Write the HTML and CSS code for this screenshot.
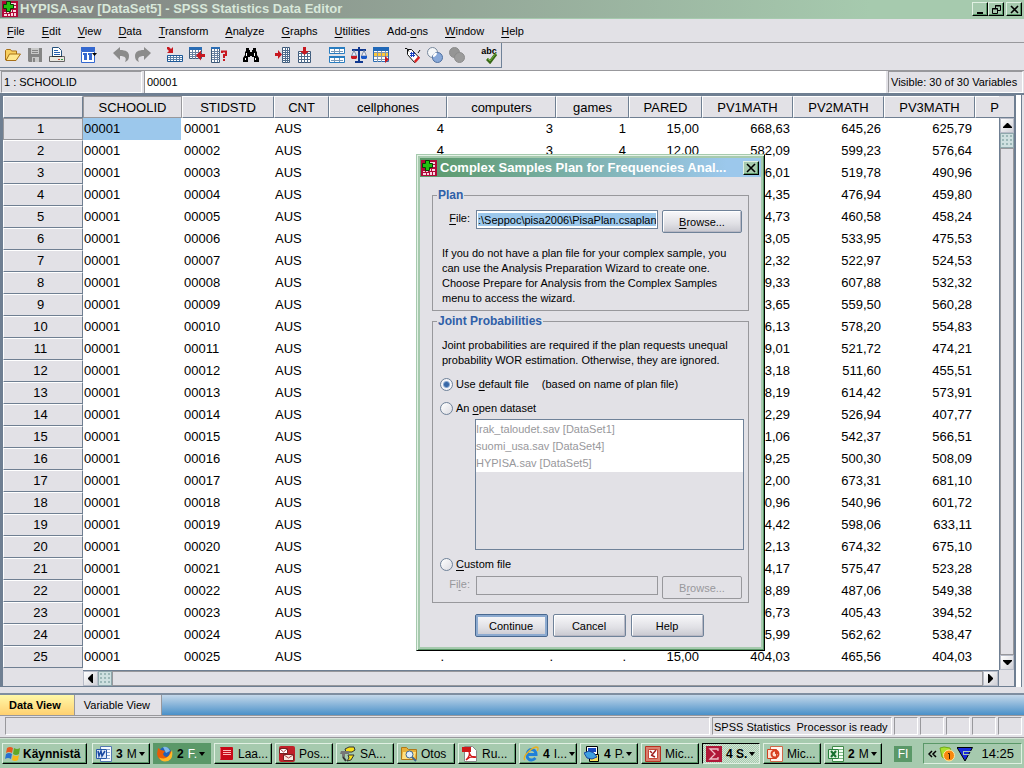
FILE: index.html
```html
<!DOCTYPE html>
<html lang="en">
<head>
<meta charset="utf-8">
<title>HYPISA.sav [DataSet5] - SPSS Statistics Data Editor</title>
<link rel="stylesheet" href="styles.css">
</head>
<body>
<svg class="defs" width="0" height="0" aria-hidden="true">
  <symbol id="app" viewBox="0 0 16 16"><path fill="#b00838" d="M0 0h16v16H0z"/><path fill="#f8d8e0" d="M9 2h5v2H9zM9 5h2v2H9zM12 5h2v2h-2zM2 11h2v1H2zM5 11h2v1H5zM8 9h2v2H8zM11 9h3v2h-3zM2 13h3v2H2zM6 13h2v2H6zM9 12h2v3H9zM12 12h2v3h-2z"/><path fill="#20c010" stroke="#063c06" d="M4.500.500h4v3h3v4h-3v3h-4v-3h-3v-4h3z"/></symbol>
</svg>
<div class="window">
  <header class="titlebar">
    <svg class="i16"><use href="#app"/></svg>
    <h1>HYPISA.sav [DataSet5] - SPSS Statistics Data Editor</h1>
    <div class="winbtns">
      <button aria-label="Minimize"><svg width="13" height="11"><path d="M3 8h6v2H3z"/></svg></button>
      <button aria-label="Restore"><svg width="13" height="11"><path fill="none" stroke="#000" d="M5.500 4V1.500h5v5H8M5 2h6M2.500 4.500h5v5h-5zM2 5h6"/></svg></button>
      <button class="x" aria-label="Close"><svg width="13" height="11"><path fill="none" stroke="#000" stroke-width="1.600" d="M3 2l7 7M10 2L3 9"/></svg></button>
    </div>
  </header>
  <nav class="menu">
    <a href="#"><u>F</u>ile</a><a href="#"><u>E</u>dit</a><a href="#"><u>V</u>iew</a><a href="#"><u>D</u>ata</a><a href="#"><u>T</u>ransform</a><a href="#"><u>A</u>nalyze</a><a href="#"><u>G</u>raphs</a><a href="#"><u>U</u>tilities</a><a href="#">Add-<u>o</u>ns</a><a href="#"><u>W</u>indow</a><a href="#"><u>H</u>elp</a>
  </nav>
  <div class="toolbar">
    <div class="group">
      <button aria-label="Open"><svg class="i16" viewBox="0 0 16 16"><path fill="#f8d060" stroke="#a87018" d="M.5 13V3.500l1-1h4l1 1.500h5v3"/><path fill="#ffe890" stroke="#a87018" d="M1 13.500L4.500 7h11L11 13.500z"/></svg></button>
      <button aria-label="Save"><svg class="i16" viewBox="0 0 16 16"><path fill="#858585" d="M1 1h14v14H2l-1-1z"/><path fill="#c8c8c8" d="M4 1h8v6H4zM5 10h7v5H5z"/><path fill="#858585" d="M5 3h6v1H5zM5 5h6v1H5zM6 11h2v4H6z"/></svg></button>
      <button aria-label="Print"><svg class="i16" viewBox="0 0 16 16"><path fill="#fff" stroke="#24507c" d="M3.500 9.500v-9h6l3 3v6z"/><path stroke="#2860b0" d="M5 3.500h4M5 5.500h6M5 7.500h6"/><path fill="#e8e6e0" stroke="#666" d="M.5 9.500h15v5H.5z"/><path fill="#303030" d="M3 9h10v1H3z"/><path fill="#d04030" d="M9 12h2v1H9z"/><path fill="#30a040" d="M12 12h2v1h-2z"/></svg></button>
    </div>
    <div class="group">
      <button aria-label="Recall dialog"><svg class="i16" viewBox="0 0 16 16"><path fill="#3468d0" d="M0 0h14v4H0z"/><path fill="#fff" stroke="#3468d0" d="M.5 4.500h13v11H.5z"/><path fill="#3468d0" d="M2 6h4v2H2zM7 6h4v2H7zM3 8h3v5H3zM8 8h3v5H8z"/><path d="M11 6h5l-2.500 3z"/></svg></button>
    </div>
    <div class="group">
      <button aria-label="Undo"><svg class="i16" viewBox="0 0 16 16"><path fill="#8b8b8b" d="M0 6l7-6v3c6 0 9 2 9 6 0 3-1 5-4 6 2-4 0-6-5-6v4z"/></svg></button>
      <button aria-label="Redo"><svg class="i16" viewBox="0 0 16 16"><path fill="#8b8b8b" d="M16 6L9 0v3C3 3 0 5 0 9c0 3 1 5 4 6-2-4 0-6 5-6v4z"/></svg></button>
    </div>
    <div class="group">
      <button aria-label="Go to case"><svg class="i16" viewBox="0 0 16 16"><path fill="#c81820" d="M0 0h2l2 2 2-2v6H0l2-2-2-2z"/><path fill="#fff" stroke="#1c5898" d="M.5 8.500h15v6H.5z"/><path stroke="#5880a8" d="M1 10.500h14M1 12.500h14M3.500 9v5M6.500 9v5M9.500 9v5M12.500 9v5"/></svg></button>
      <button aria-label="Go to variable"><svg class="i16" viewBox="0 0 16 16"><path fill="#fff" stroke="#3c5878" d="M.5 1.500h12v10H.5z"/><path fill="#2a6cb4" d="M0 0h13v3H0z"/><path stroke="#6880a0" d="M1 5.500h12M1 7.500h12M1 9.500h12M3.500 3v9M6.500 3v9M9.500 3v9"/><path fill="#c81820" d="M7 8.500l5-5V7h4v3h-4v3.500z"/></svg></button>
      <button aria-label="Variables"><svg class="i16" viewBox="0 0 16 16"><path fill="#fff" stroke="#3c5878" d="M.5.500h8v15h-8z"/><path fill="#2a6cb4" d="M0 0h9v2H0z"/><path stroke="#6880a0" d="M1 4.500h8M1 6.500h8M1 8.500h8M1 10.500h8M1 12.500h8M3.500 2v13M6.500 2v13"/><path fill="none" stroke="#c81820" stroke-width="2" d="M11 6V4.500h4V8h-2v3M13 12v2"/></svg></button>
    </div>
    <div class="group">
      <button aria-label="Find"><svg class="i16" viewBox="0 0 16 16"><path d="M3 1h3v2h1v2h2V3h1V1h3v3l1 1v3l2 3v4h-5v-5H9V9H7v1H5v5H0v-4l2-3V5l1-1z"/><path fill="#fff" d="M3 6h1v3H3zM11 6h1v3h-1zM2 11h1v2H2zM12 11h1v2h-1z"/></svg></button>
    </div>
    <div class="group">
      <button aria-label="Insert case"><svg class="i16" viewBox="0 0 16 16"><path fill="#c81820" d="M0 6h3V3l4 4.500L3 12V9H0z"/><path fill="#fff" stroke="#3c5878" d="M7.500.500h7v15h-7z"/><path stroke="#506c8c" d="M7 3.500h8M7 5.500h8M7 7.500h8M7 9.500h8M7 11.500h8M7 13.500h8M10.500 0v16M12.500 0v16"/></svg></button>
      <button aria-label="Insert variable"><svg class="i16" viewBox="0 0 16 16"><path fill="#fff" stroke="#3c5878" d="M1.500 4.500h12v11h-12z"/><path stroke="#506c8c" d="M1 6.500h13M1 9.500h13M1 12.500h13M4.500 4v12M7.500 4v12M10.500 4v12"/><path fill="#c81820" d="M6 0h3v4h3L7.500 8 3 4h3z"/></svg></button>
    </div>
    <div class="group">
      <button aria-label="Split file"><svg class="i16" viewBox="0 0 16 16"><path fill="#fff" stroke="#287cc0" d="M.5.500h15v6H.5zM.5 9.500h15v6H.5z"/><path fill="#287cc0" d="M0 0h16v2H0zM0 9h16v2H0z"/><path stroke="#7898b8" d="M2 4.500h12M2 13.500h12M5.500 2v4M10.500 2v4M5.500 11v4M10.500 11v4"/></svg></button>
      <button aria-label="Weight cases"><svg class="i16" viewBox="0 0 16 16"><path fill="#103890" d="M7 0h2v2h6v2H9v10h3v2H4v-2h3V4H1V2h6z"/><path fill="#eef" stroke="#8090a8" d="M.5 9L3 3.500 5.500 9zM10.500 9L13 3.500 15.500 9z"/><path fill="#c81820" d="M0 9h6v2l-1 1H1l-1-1z"/><path fill="#1858c8" d="M10 9h6v2l-1 1h-4l-1-1z"/></svg></button>
      <button aria-label="Select cases"><svg class="i16" viewBox="0 0 16 16"><path fill="#fff" stroke="#2a6cb4" d="M.5.500h15v14H.5z"/><path fill="#2068b8" d="M0 0h16v4H0z"/><path fill="#ffc838" d="M1 6h14v3H1z"/><path stroke="#8498b0" d="M1 5.500h14M1 9.500h14M1 12.500h14M4.500 4v11M8.500 4v11M12.500 4v8"/><path fill="#c81820" d="M12 9l4 3.500-4 3.500z"/></svg></button>
    </div>
    <div class="group">
      <button aria-label="Value labels"><svg class="i16" viewBox="0 0 16 16"><path fill="#fff" stroke="#111" d="M2.500 2.500h4l7.500 8-4.500 5-7-8z"/><path fill="#d82020" d="M9 14l4.500-5 1.500 2-4.500 5z"/><path fill="none" stroke="#111" d="M0 1.500h2l2 3M13 6l2-3"/><path stroke="#1840c0" d="M6.500 5v5M8.500 5v5M5 6.500h5M5 8.500h5"/></svg></button>
      <button aria-label="Use variable sets"><svg class="i16" viewBox="0 0 16 16"><circle cx="5.500" cy="5.500" r="5" fill="#f4f6f8" stroke="#78889c"/><circle cx="10.500" cy="10.500" r="5" fill="#88a8d8" stroke="#5070a0"/><path fill="#fff" d="M6 9c0-2 2-4 4-3 0 2-2 4-4 4z"/></svg></button>
      <button aria-label="Show all variables"><svg class="i16" viewBox="0 0 16 16"><circle cx="5.500" cy="5.500" r="5" fill="#959595" stroke="#8c8c8c"/><circle cx="10.500" cy="10.500" r="5" fill="#9b9b9b" stroke="#8c8c8c"/></svg></button>
    </div>
    <div class="group">
      <button class="spell" aria-label="Spell check">abc<svg width="12" height="11"><path fill="none" stroke="#386818" stroke-width="3" d="M1 6l3 3 6-8"/><path fill="none" stroke="#70b038" d="M1 5l3 3 6-8"/></svg></button>
    </div>
  </div>
  <div class="editrow">
    <output class="cellname">1 : SCHOOLID</output>
    <input class="cellvalue" aria-label="Cell value" value="00001">
    <output class="visible">Visible: 30 of 30 Variables</output>
  </div>
  <main class="pane">
    <div class="sheet">
      <div class="view">
        <table>
          <colgroup><col class="c80"><col class="c99"><col class="c92"><col class="c55"><col class="c118"><col class="c109"><col class="c73"><col class="c73"><col class="c91"><col class="c91"><col class="c91"><col></colgroup>
          <thead><tr><th></th><th class="current">SCHOOLID</th><th>STIDSTD</th><th>CNT</th><th>cellphones</th><th>computers</th><th>games</th><th>PARED</th><th>PV1MATH</th><th>PV2MATH</th><th>PV3MATH</th><th class="cut">P</th></tr></thead>
          <tbody id="cases"></tbody>
        </table>
      </div>
      <div class="vscroll"><button aria-label="Scroll up"><svg width="9" height="5"><path d="M4 0h1l4 4v1H0V4z"/></svg></button><i class="thumb"></i><i class="track"></i><button aria-label="Scroll down"><svg width="9" height="5"><path d="M0 0h9v1L5 5H4L0 1z"/></svg></button></div>
      <div class="hscroll"><button aria-label="Scroll left"><svg width="5" height="9"><path d="M5 0v9H4L0 5V4l4-4z"/></svg></button><i class="thumb"></i><i class="track"></i><button aria-label="Scroll right"><svg width="5" height="9"><path d="M0 0v9h1l4-4V4L1 0z"/></svg></button></div>
    </div>
  </main>
  <div class="tabs"><button class="on">Data View</button><button>Variable View</button></div>
  <footer class="status"><span class="grow"></span><span class="proc">SPSS Statistics&nbsp; Processor is ready</span><span></span><span></span><span></span><span></span><span></span></footer>
</div>

<section class="dialog" role="dialog" aria-labelledby="dlgtitle">
  <header class="dlgbar">
    <svg class="i16"><use href="#app"/></svg>
    <h2 id="dlgtitle">Complex Samples Plan for Frequencies Anal...</h2>
    <button aria-label="Close"><svg width="12" height="10"><path fill="none" stroke="#000" stroke-width="1.600" d="M2 1l8 8M10 1L2 9"/></svg></button>
  </header>
  <form class="dlgbody">
    <fieldset>
      <legend>Plan</legend>
      <div class="filerow">
        <label for="plan"><u>F</u>ile:</label>
        <input id="plan" class="path selected" value=":\Seppoc\pisa2006\PisaPlan.csaplan">
        <button type="button" class="btn"><u>B</u>rowse...</button>
      </div>
      <p class="hint">If you do not have a plan file for your complex sample, you<br>can use the Analysis Preparation Wizard to create one.<br>Choose Prepare for Analysis from the Complex Samples<br>menu to access the wizard.</p>
    </fieldset>
    <fieldset class="joint">
      <legend>Joint Probabilities</legend>
      <p>Joint probabilities are required if the plan requests unequal<br>probability WOR estimation. Otherwise, they are ignored.</p>
      <div class="opt"><input type="radio" name="jp" id="jp1" checked><label for="jp1">Use <u>d</u>efault file</label><span class="note">(based on name of plan file)</span></div>
      <div class="opt"><input type="radio" name="jp" id="jp2"><label for="jp2">An <u>o</u>pen dataset</label></div>
      <select size="7" disabled aria-label="Open datasets"><option>Irak_taloudet.sav [DataSet1]</option><option>suomi_usa.sav [DataSet4]</option><option>HYPISA.sav [DataSet5]</option></select>
      <div class="opt"><input type="radio" name="jp" id="jp3"><label for="jp3"><u>C</u>ustom file</label></div>
      <div class="filerow off">
        <label for="custom">Fi<u>l</u>e:</label>
        <input id="custom" class="path" disabled>
        <button type="button" class="btn" disabled>B<u>r</u>owse...</button>
      </div>
    </fieldset>
    <div class="actions"><button type="button" class="btn main">Continue</button><button type="button" class="btn">Cancel</button><button type="button" class="btn">Help</button></div>
  </form>
</section>

<nav class="taskbar" aria-label="Taskbar">
  <button class="start"><svg class="i18" viewBox="0 0 18 16"><path fill="#e85820" d="M3 2q3-2 6 0L8 7Q5 5 2 7z"/><path fill="#60a828" d="M10 2q3 2 6 0l-1 6q-3 2-6 0z"/><path fill="#2870d0" d="M2 8q3-2 6 0l-1 5q-3-2-6 0z"/><path fill="#f8b818" d="M9 9q3 2 6 0l-1 5q-3 2-6 0z"/></svg>Käynnistä</button>
  <div class="tasks">
  <button><svg class="i16" viewBox="0 0 16 16"><path fill="#f8fbff" stroke="#5478b0" d="M4.500.500h11v15h-11z"/><path stroke="#8aa8d0" d="M11 3.500h3M11 6.500h3M11 9.500h3M11 12.500h3"/><path fill="#dce8f8" stroke="#2858a8" d="M.5 3.500h10v9H.5z"/><path fill="none" stroke="#1848a0" stroke-width="1.500" d="M2 5l1 5 2-5 1 5 3-5"/></svg><b>3</b> M<i class="drop"></i></button>
  <button class="dark"><svg class="i16" viewBox="0 0 16 16"><circle cx="8" cy="7.500" r="6.500" fill="#2060b8"/><path fill="#80b8e8" d="M6 1q5-1 7 4l-4 2z"/><path fill="#e85c08" d="M1 2l3 2 4 1-2 3q1 3 4 3 3-2 3-6 2 1 1 5-2 5-7 5-6-1-7-7z"/><path fill="#ffb828" d="M15 4q2 11-7 11.500-4 0-6-4 9 4 13-7.500z"/></svg><b>2</b> F.<i class="drop"></i></button>
  <button><svg class="i16" viewBox="0 0 16 16"><rect x="2" y="1" width="13" height="13" rx="1" fill="#c80818"/><path fill="#e86068" d="M2 2h1v11H2z"/><path stroke="#ffb8b8" d="M5 4.500h8M5 6.500h8M5 8.500h8"/></svg>Laa...</button>
  <button><svg class="i16" viewBox="0 0 16 16"><rect width="16" height="16" rx="2" fill="#c02028"/><path fill="#fff" stroke="#782020" d="M.5 2.500h8v5h-8z"/><path fill="none" stroke="#a84040" d="M1 3l3.500 3L8 3"/><path fill="#f8e8e0" stroke="#782020" d="M4.500 8.500h10v6h-10z"/><path fill="none" stroke="#a84040" d="M5 9l4.500 3L14 9"/></svg>Pos...</button>
  <button><svg class="i16" viewBox="0 0 16 16"><path fill="#f8e018" stroke="#333" d="M5 3l4-2h5l1 3-3 2H6z"/><path fill="#777" d="M1 5h8v3H5v3H2V8H0z"/><path fill="#f8e018" stroke="#333" d="M8 9h6l-3 5-4 1 2-3z"/><path stroke="#333" stroke-width="2" d="M3 11l3 4"/></svg>SA...</button>
  <button><svg class="i16" viewBox="0 0 16 16"><path fill="#e8b038" stroke="#b07818" d="M.5 13.500v-12h5l2 2h8v10z"/><path fill="#ffe080" d="M2 6h13l-2 7H1z"/><circle cx="8.500" cy="8.500" r="3.500" fill="#e0f0ff" stroke="#406890"/><path stroke="#406890" stroke-width="2" d="M11 11l4 4"/></svg>Otos</button>
  <button><svg class="i16" viewBox="0 0 16 16"><path fill="#fff" stroke="#888" d="M2.500.500h8l4 4v11h-12z"/><path fill="#d01818" d="M0 1h9v5H0z"/><path fill="none" stroke="#d01818" stroke-width="1.300" d="M4 14c3-3 4-6 3-8 1 4 3 6 7 5-4-1-7 0-10 3z"/></svg>Ru...</button>
  <button><svg class="i16" viewBox="0 0 16 16"><path fill="none" stroke="#2080d8" stroke-width="3" d="M3 8.500h10c0-3-2-5-4.500-5S4 6 4 9s2 5 4.500 5c2 0 3-1 4-2"/><path fill="none" stroke="#e8b020" stroke-width="1.400" d="M2 14C-1 11 8 2 13 1c3 0 2 3 1 4"/></svg><b>4</b> I...<i class="drop"></i></button>
  <button><svg class="i16" viewBox="0 0 16 16"><path fill="#fff" stroke="#000" d="M2.500.500h11v9h-11z"/><path fill="#1848c0" d="M4 2h8v4H4z"/><path fill="#f8e060" stroke="#000" d="M5.500 8.500h9v7h-9z"/><path fill="#40a0e0" stroke="#1848a0" d="M0 7l5-2 5 2 3 4-5 2-5-1z"/></svg><b>4</b> P.<i class="drop"></i></button>
  <button><svg class="i16" viewBox="0 0 16 16"><path fill="#d88070" stroke="#b83020" d="M.5.500h15v15H.5z"/><path fill="#fff" stroke="#c84838" d="M3.500 3.500h9v9h-9z"/><path stroke="#a02020" stroke-width="1.500" d="M5 5l2 2M11 4L7 9M6 9l4 2"/></svg>Mic...</button>
  <button class="active"><svg class="i16" viewBox="0 0 16 16"><path fill="#b01838" d="M0 0h16v16H0z"/><path fill="none" stroke="#f0c0c8" stroke-width="1.300" d="M12 5V3H4l5 5-5 5h8v-2"/></svg><b>4 S.</b><i class="drop"></i></button>
  <button><svg class="i16" viewBox="0 0 16 16"><path fill="#fff4ee" stroke="#d06848" d="M3.500.500h12v15h-12z"/><path fill="#ffe0d0" stroke="#d04020" d="M.5 3.500h9v9h-9z"/><circle cx="8" cy="8" r="3.500" fill="none" stroke="#d84020" stroke-width="2"/><path fill="#d84020" d="M8 4v4h4q0-4-4-4z"/></svg>Mic...</button>
  <button><svg class="i16" viewBox="0 0 16 16"><path fill="#f4fff4" stroke="#408848" d="M4.500.500h11v15h-11z"/><path stroke="#80b888" d="M11 3.500h4M11 6.500h4M11 9.500h4M11 12.500h4"/><path fill="#dcf0dc" stroke="#28803c" d="M.5 3.500h10v9H.5z"/><path stroke="#187030" stroke-width="2" d="M3 5l5 6M8 5l-5 6"/></svg><b>2</b> M<i class="drop"></i></button>
  </div>
  <span class="lang">FI</span>
  <div class="tray">
    <svg width="9" height="8"><path fill="none" stroke="#000" stroke-width="1.500" d="M4 1L1 4l3 3M8 1L5 4l3 3"/></svg>
    <svg class="i16" viewBox="0 0 16 16"><path fill="#a8e030" stroke="#70a818" d="M1 2l4-1 6 1 2 5-4 7-6-3z"/><circle cx="10" cy="9.500" r="5.500" fill="#f88810" stroke="#ffe8a0"/><path fill="none" stroke="#402000" d="M9 7.500h1.500V13"/></svg>
    <svg class="i16" viewBox="0 0 16 16"><path fill="#1828d8" stroke="#000" d="M0 1.500h15.500L8 15z"/><path stroke="#a6caae" d="M6 5.500h8M7 8.500h5M6.500 5v4"/></svg>
    <time>14:25</time>
  </div>
</nav>
<script src="cases.js"></script>
</body>
</html>
```
FILE: styles.css
```css
* { box-sizing: border-box; }
body {
  margin: 0; height: 100vh; overflow: hidden; display: flex; flex-direction: column;
  background: #e2e1e6; color: #000; font: 11px/14px "Liberation Sans", Arial, sans-serif;
}
button, input, select { font: inherit; color: inherit; margin: 0; }
button { display: flex; align-items: center; justify-content: center; padding: 0; border: 0; background: none; white-space: nowrap; }
h1, h2, p { margin: 0; }
svg { flex: none; display: block; }
u { text-underline-offset: 2px; }
.defs { position: absolute; }
.i16 { width: 16px; height: 16px; }
.i18 { width: 18px; height: 16px; }
.window { flex: 1; min-height: 0; display: flex; flex-direction: column; }

.titlebar {
  flex: none; height: 19px; padding: 0 2px; display: flex; align-items: center; gap: 2px;
  background: linear-gradient(90deg, #808080, #a6caae 85%); border-bottom: 1px solid #a6caae;
}
.titlebar h1 { flex: 1; font-size: 13px; line-height: 18px; color: #d8e8da; white-space: nowrap; }
.winbtns { display: flex; }
.winbtns button, .dlgbar button {
  width: 16px; height: 14px; background: #a6caae;
  border: 1px solid; border-color: #e0f0e2 #000 #000 #e0f0e2; box-shadow: inset -1px -1px #5a9868;
}
.winbtns .x { margin-left: 2px; }

.menu { flex: none; height: 24px; padding-left: 7px; display: flex; align-items: center; gap: 17px; border-bottom: 1px solid #98989c; }
.menu a { color: #000; text-decoration: none; }

.toolbar { flex: none; align-self: flex-start; height: 25px; padding: 0 1px 0 2px; display: flex; align-items: center; gap: 10px; border-right: 1px solid #6f8299; border-bottom: 1px solid #6f8299; }
.group { display: flex; }
.group button { width: 22px; height: 22px; }
.group .spell { display: grid; font-weight: bold; font-size: 9px; line-height: 8px; align-content: start; justify-content: start; padding: 3px 0 0 2px; }
.spell svg { margin: -2px 0 0 6px; }

.editrow { flex: none; height: 23px; margin-top: 2px; padding: 0 1px; display: flex; align-items: stretch; gap: 2px; border-top: 1px solid #98989c; }
.editrow output { border: 1px solid; border-color: #98989c #fff #fff #98989c; padding: 3px 2px; white-space: nowrap; }
.cellname { flex: 0 0 141px; }
.visible { flex: 0 0 135px; }
.cellvalue { flex: 1; min-width: 0; border: 0; border-left: 1px solid #98989c; padding: 0 2px; background: #fff; }

.pane { flex: 1; min-height: 0; display: flex; background: #e2e1e6; border-top: 2px solid #6f7f92; padding-right: 3px; }
.sheet {
  flex: 1; min-width: 0; display: grid; grid-template: minmax(0, 1fr) 16px / minmax(0, 1fr) 15px;
  border: 1px solid #6f7f92; border-left-width: 3px;
  margin-right: 6px; box-shadow: 1px 0 #6f7f92, 2px 0 #fff, 6px 0 #fff, 7px 0 #6f7f92;
}
.view { overflow: hidden; background: linear-gradient(90deg, #e2e1e6 80px, #fff 80px); }
table { table-layout: fixed; width: 100%; border-collapse: separate; border-spacing: 0; font-size: 13px; line-height: 18px; }
.c80 { width: 80px; } .c99 { width: 99px; } .c92 { width: 92px; } .c55 { width: 55px; } .c118 { width: 118px; }
.c109 { width: 109px; } .c73 { width: 73px; } .c91 { width: 91px; }
th, td { height: 22px; padding: 0 3px; white-space: nowrap; overflow: hidden; }
th { font-weight: normal; text-align: center; background: #e2e1e6; border: 1px solid; border-color: #fff #6f7f92 #6f7f92 #fff; }
thead th { padding-top: 2px; }
th.current { border-color: #98989c; }
th.cut { border-right: 0; text-align: right; padding-right: 0; }
tbody th { padding-right: 8px; }
td { text-align: right; vertical-align: top; padding-top: 2px; }
td:nth-child(-n+4) { text-align: left; padding-left: 1px; }
td:nth-child(3) { padding-left: 2px; }
td.current { background: linear-gradient(90deg, #9cc8ec 98px, #fff 98px); }

.vscroll { margin-top: 22px; display: flex; flex-direction: column; border-left: 1px solid #6f7f92; box-shadow: 0 -1px #6f7f92; }
.hscroll { grid-column: 1; margin-left: 80px; display: flex; border-top: 1px solid #6f7f92; border-right: 1px solid #6f7f92; }
.vscroll button, .hscroll button { flex: none; width: 15px; height: 15px; background: linear-gradient(135deg, #fff, #d0d0d6); border: 1px solid #b8bcc8; }
.vscroll button { width: 14px; }
.thumb { flex: none; width: 14px; height: 15px; border: 1px solid #8fa8ac; background: radial-gradient(#9cb8b8 25%, transparent 30%) 0 0 / 4px 4px, #cfe0e0; }
.track { flex: 1; border: 1px solid #98989c; }

.tabs { flex: none; height: 23px; margin-top: 6px; display: flex; border-top: 2px solid #7f8ea0; border-bottom: 1px solid #98989c; background: linear-gradient(#c4d8ea, #4a90c8); }
.tabs button { padding: 0 11px 0 9px; background: #e2e1e6; border-right: 1px solid #98989c; }
.tabs .on { font-weight: bold; padding-right: 13px; background: linear-gradient(#fff8a8, #ffd070); }
.status { flex: none; height: 22px; padding: 1px 2px 2px 5px; display: flex; gap: 2px; border-bottom: 1px solid #98989c; }
.status span { flex: 0 0 24px; border: 1px solid; border-color: #98989c #fff #fff #98989c; padding: 2px 1px; white-space: nowrap; }
.status .grow { flex: 1; }
.status .proc { flex: 0 0 180px; }

.dialog { position: absolute; left: 416px; top: 154px; width: 349px; background: #e2e1e6; border: 1px solid; border-color: #a6caae #000 #000 #a6caae; box-shadow: inset 1px 1px #e4f2e6, inset -1px -1px #5a9868, inset 0 0 0 3px #a6caae; padding: 3px; }
.dlgbar { height: 19px; display: flex; align-items: center; gap: 3px; padding: 0 2px 0 1px; background: linear-gradient(90deg, #5a9868, #9cc8ec 90%); }
.dlgbar h2 { flex: 1; color: #fff; font-size: 13px; line-height: 18px; white-space: nowrap; overflow: hidden; }
.dlgbody { padding: 11px 12px 10px; }
fieldset { margin: 0 0 3px; padding: 8px 6px 4px 9px; border: 1px solid #98989c; min-width: 0; }
legend { margin-left: -5px; padding: 0 1px; font-weight: bold; font-size: 12px; line-height: 14px; color: #2f5fa8; }
.filerow { display: flex; align-items: flex-start; gap: 4px; }
.filerow label { flex: 1; padding: 1px 2px 0 0; text-align: right; }
.path { flex: 0 0 182px; height: 19px; border: 1px solid #6f8299; padding: 2px; background: #fff; }
.selected { padding: 2px 1px; background: linear-gradient(#9cc8ec, #9cc8ec) content-box, #fff; text-align: right; }
.btn { flex: 0 0 80px; height: 23px; border: 1px solid #6f8299; border-radius: 2px; background: linear-gradient(#f8f8fa, #e0e0e5 60%, #c8c8d0); box-shadow: inset 1px 1px #fff, inset -1px -1px #b8b8c4; }
.hint { margin-top: 13px; }
p { line-height: 15px; white-space: nowrap; }
.joint { padding: 10px 6px 3px 9px; margin-bottom: 11px; }
.opt { display: flex; align-items: center; height: 14px; margin: 9px 0 10px -2px; gap: 3px; }
.opt + .opt { margin-bottom: 4px; }
.opt input { appearance: none; width: 13px; height: 13px; border: 1px solid #6f8299; border-radius: 50%; background: linear-gradient(135deg, #fff, #dcdce2); }
.opt input:checked { background: radial-gradient(circle, #3868a8 0 2px, #88a8d0 3px, #f4f4f8 4px); }
.note { margin-left: 10px; }
select { display: block; appearance: none; width: 269px; height: 131px; margin-left: 33px; padding: 0; border: 1px solid #6f8299; border-radius: 0; background: #e2e1e6; overflow: hidden; opacity: 1; }
option { min-height: 17px; padding: 3px 0 0; line-height: 14px; background: #fff; color: #98989c; }
option:last-child { padding-bottom: 3px; }
select + .opt { margin: 7px 0 5px -2px; }
.off { color: #98989c; }
.off .path { background: #e2e1e6; border-color: #98989c; }
.off .btn { background: none; border-color: #98989c; box-shadow: none; }
.actions { display: flex; justify-content: center; gap: 5px; padding-right: 3px; }
.actions .btn { flex-basis: 73px; }
.btn.main { border-color: #486890; box-shadow: inset 0 0 0 2px #8caad0; }

.taskbar { flex: none; height: 30px; padding: 4px 2px; display: flex; gap: 5px; background: #a6caae; border-top: 1px solid #d0e4d4; font-size: 12px; }
.taskbar button { height: 21px; gap: 4px; padding-left: 3px; justify-content: flex-start; border: 1px solid; border-color: #e0f0e2 #000 #000 #e0f0e2; box-shadow: inset -1px -1px #5a9868; overflow: hidden; }
.start { flex: 0 0 85px; font-weight: bold; }
.taskbar .start { gap: 1px; padding-left: 1px; }
.tasks { flex: 1; min-width: 0; display: flex; gap: 3px; }
.tasks button { flex: 0 1 58px; min-width: 0; }
.taskbar .dark { background: #5a9868; color: #fff; border-color: #5a9868; }
.dark b { color: #000; }
.taskbar .active { border-color: #000 #e0f0e2 #e0f0e2 #000; box-shadow: none; background: repeating-conic-gradient(#d3e5d6 0 25%, #a6caae 0 50%) 0 0 / 2px 2px; }
.drop { flex: none; margin-left: -2px; border: 3px solid transparent; border-top: 4px solid #000; border-bottom: 0; }
.lang { align-self: center; padding: 1px 4px; margin-right: 6px; background: #5a9868; color: #fff; }
.tray { display: flex; align-items: center; gap: 2px; padding: 0 7px 0 4px; border: 1px solid; border-color: #5a9868 #e0f0e2 #e0f0e2 #5a9868; font-size: 13px; }
.tray time { margin-left: 6px; }
```
FILE: cases.js
```js
const pv = `668,63 645,26 625,79|582,09 599,23 576,64|556,01 519,78 490,96|484,35 476,94 459,80|474,73 460,58 458,24|523,05 533,95 475,53|532,32 522,97 524,53|599,33 607,88 532,32|553,65 559,50 560,28|566,13 578,20 554,83|509,01 521,72 474,21|503,18 511,60 455,51|608,19 614,42 573,91|512,29 526,94 407,77|541,06 542,37 566,51|509,25 500,30 508,09|672,00 673,31 681,10|560,96 540,96 601,72|604,42 598,06 633,11|662,13 674,32 675,10|564,17 575,47 523,28|498,89 487,06 549,38|416,73 405,43 394,52|555,99 562,62 538,47|404,03 465,56 404,03`.split("|");
const home = { 0: ["4", "3", "1", "15,00"], 1: ["4", "3", "4", "12,00"], 24: [".", ".", ".", "15,00"] };
document.getElementById("cases").innerHTML = pv.map((line, i) => {
  const values = ["00001", String(i + 1).padStart(5, "0"), "AUS", ...(home[i] || ["", "", "", ""]), ...line.split(" "), ""];
  const current = i === 0 ? ' class="current"' : "";
  return `<tr><th${current}>${i + 1}</th>` + values.map((v, c) => `<td${c === 0 ? current : ""}>${v}</td>`).join("") + "</tr>";
}).join("");
```
